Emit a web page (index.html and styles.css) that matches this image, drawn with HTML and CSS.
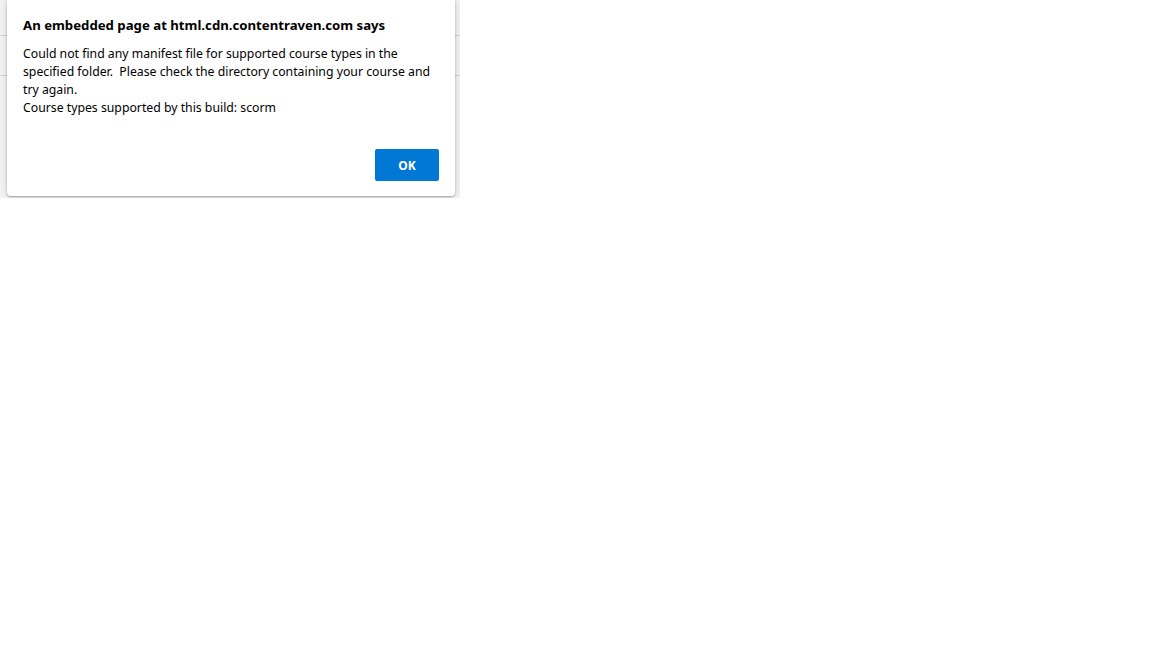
FILE: index.html
```html
<!DOCTYPE html>
<html>
<head>
<meta charset="utf-8">
<link rel="stylesheet" href="styles.css">
</head>
<body>
<div class="frame">
  <div class="backdrop">
    <div class="rule rule-a"></div>
    <div class="rule rule-b"></div>
  </div>
  <div class="dialog">
    <div class="title">An embedded page at html.cdn.contentraven.com says</div>
    <div class="message">Could not find any manifest file for supported course types in the specified folder.&nbsp; Please check the directory containing your course and try again.<br>Course types supported by this build: scorm</div>
    <div class="actions"><button class="ok">OK</button></div>
  </div>
</div>
</body>
</html>
```
FILE: styles.css
```css
html, body {
  margin: 0;
  padding: 0;
  background: #ffffff;
  font-family: "Noto Sans", "Open Sans", sans-serif;
}
.frame {
  position: relative;
  width: 460px;
  height: 198px;
  overflow: hidden;
  background: #f4f4f4;
}
.backdrop {
  display: flex;
  flex-direction: column;
}
.rule {
  height: 1px;
  background: #d2d2d2;
}
.rule-a { margin-top: 35px; }
.rule-b { margin-top: 39px; }
.dialog {
  position: absolute;
  left: 7px;
  top: 0;
  width: 448px;
  height: 196px;
  box-sizing: border-box;
  background: #ffffff;
  border-radius: 0 0 4px 4px;
  box-shadow: 0 1px 2px rgba(0,0,0,0.28), 0 0 8px rgba(0,0,0,0.16);
  padding: 15px 16px 0 16px;
  color: #000;
}
.title {
  font-size: 13.2px;
  font-weight: 700;
  line-height: 20px;
  letter-spacing: 0;
}
.message {
  margin-top: 10px;
  font-size: 12.25px;
  line-height: 18px;
  letter-spacing: 0;
}
.actions {
  display: flex;
  justify-content: flex-end;
  margin-top: 32px;
}
.ok {
  width: 64px;
  height: 32px;
  border: none;
  border-radius: 2px;
  background: #0078d4;
  color: #fff;
  font-family: "Noto Sans", "Open Sans", sans-serif;
  font-size: 12px;
  font-weight: 700;
  padding: 0;
}
```
